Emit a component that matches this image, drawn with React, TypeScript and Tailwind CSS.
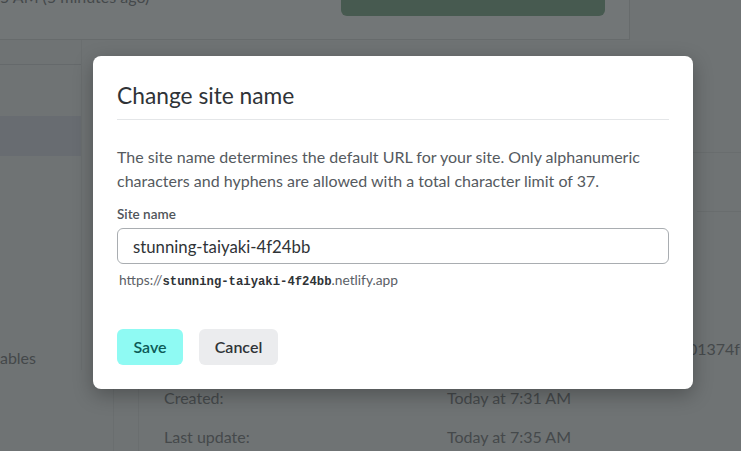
const sans = "font-['Lato','Noto_Sans',sans-serif]";

function Background() {
  return (
    <div className="absolute inset-0 bg-[#6f7374] text-[#3e4245]">
      {/* top overview card */}
      <div className="flex h-[40px] w-[630px] items-start border-r border-b border-[#676b6c] bg-[#727677]">
        <p className="-mt-[15px] text-[16px] text-[#45494b]">5 AM (5 minutes ago)</p>
        <div className="ml-auto mr-[24px] h-[16px] w-[264px] rounded-b-[6px] bg-[#475a50]" />
      </div>

      <div className="flex">
        {/* sidebar */}
        <div className="flex w-[82px] shrink-0 flex-col border-r border-[#6a6e6f]">
          <div className="mt-[24px] border-b border-[#65696b]" />
          <div className="mt-[51px] h-[40px] bg-[#686c71]" />
          <p className="mt-[190px] -ml-[119px] whitespace-nowrap text-[16px] text-[#44484a]">Environment variables</p>
        </div>

        {/* main column */}
        <div className="relative flex-1">
          <div className="ml-[598px] mt-[112px] border-t border-[#696d6e]" />
          <div className="ml-[615px] mt-[58px] border-t border-[#696d6e]" />
          <p className="ml-[597px] mt-[125px] text-[16px] text-[#45494b]">d01374f</p>
        </div>
      </div>

      {/* site information rows */}
      <div className="absolute left-[113px] top-[380px] h-[80px] border-l border-[#6a6e6f]" />
      <div className="absolute left-[138px] top-[380px] flex h-[80px] w-[620px] flex-col border-l border-[#6a6e6f] pl-[25px] pt-[6px] text-[16px] text-[#45494b]">
        <div className="flex h-[24px] items-center">
          <span className="w-[283px]">Created:</span>
          <span>Today at 7:31 AM</span>
        </div>
        <div className="mt-[15px] flex h-[24px] items-center">
          <span className="w-[283px]">Last update:</span>
          <span>Today at 7:35 AM</span>
        </div>
      </div>
    </div>
  );
}

function ChangeSiteNameModal() {
  const name = "stunning-taiyaki-4f24bb";
  return (
    <div
      role="dialog"
      aria-modal="true"
      className="absolute left-[93px] top-[56px] w-[600px] rounded-[8px] bg-white px-6 pb-6 pt-[26px] shadow-[0_6px_20px_rgba(0,0,0,0.28)]"
    >
      <h2 className="border-b border-[#e4e6e8] pb-[9px] text-[22.75px] leading-7 text-[#2f3337]">
        Change site name
      </h2>
      <p className="mt-[25px] text-[16px] leading-6 text-[#555a60]">
        The site name determines the default URL for your site. Only alphanumeric characters and
        hyphens are allowed with a total character limit of 37.
      </p>

      <label htmlFor="site-name" className="mt-[11px] block text-[13.5px] font-semibold leading-5 text-[#50555a]">
        Site name
      </label>
      <input
        id="site-name"
        type="text"
        defaultValue={name}
        className="mt-1 h-[36px] w-full rounded-[6px] border border-[#a9adb1] px-[15px] text-[16.75px] text-[#2f3337] outline-none"
      />
      <p className="mt-[7px] pl-[2px] text-[13.75px] leading-[18px] text-[#5b6066]">
        https://
        <span className="font-['Liberation_Mono',monospace] text-[12.25px] font-bold text-[#2f3337]">{name}</span>
        .netlify.app
      </p>

      <div className="mt-[38px] flex gap-4">
        <button
          type="button"
          className="h-[36px] w-[66px] rounded-[6px] bg-[#8ffaf3] text-[16px] font-semibold text-[#0c5b57]"
        >
          Save
        </button>
        <button
          type="button"
          className="h-[36px] w-[79px] rounded-[6px] bg-[#ebecee] text-[16px] font-semibold text-[#2f3337]"
        >
          Cancel
        </button>
      </div>
    </div>
  );
}

export default function App() {
  return (
    <div className={`relative h-[451px] w-[741px] overflow-hidden ${sans}`}>
      <Background />
      <ChangeSiteNameModal />
    </div>
  );
}
